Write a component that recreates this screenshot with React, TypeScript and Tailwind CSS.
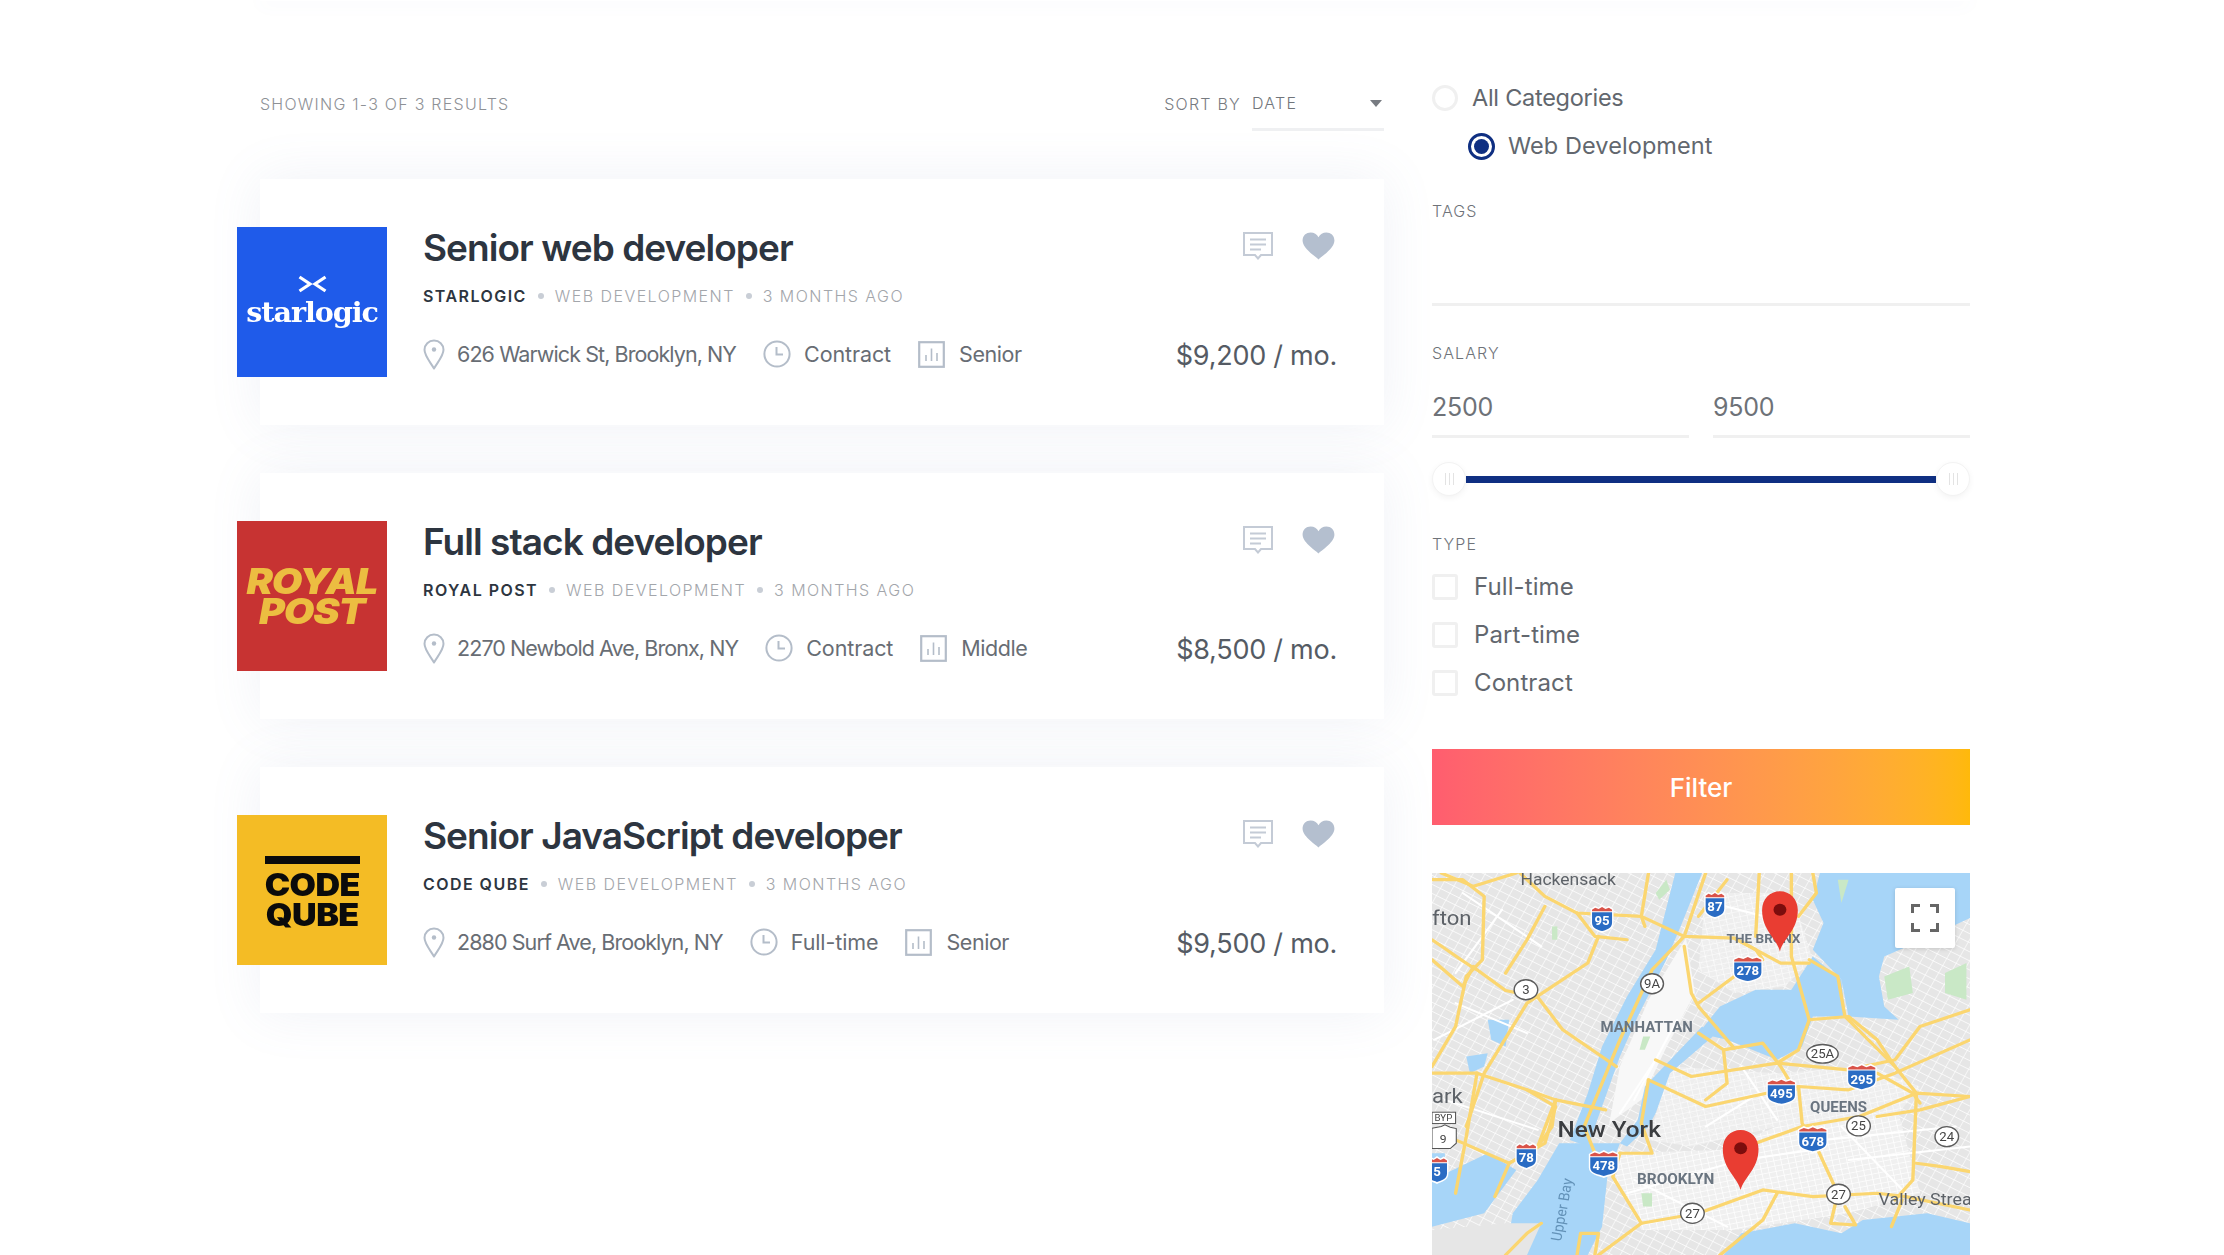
import React from "react";

const FONT = "font-['Inter','Liberation_Sans',sans-serif]";

function PinIcon() {
  return (
    <svg width="22" height="31" viewBox="0 0 22 31" fill="none" className="shrink-0">
      <path d="M11 29.5C8 24 1.5 17 1.5 10.8C1.5 5.6 5.7 1.5 11 1.5C16.3 1.5 20.5 5.6 20.5 10.8C20.5 17 14 24 11 29.5Z" stroke="#b4bdc9" strokeWidth="2" strokeLinejoin="round" />
      <circle cx="11" cy="10.5" r="2.2" fill="#b4bdc9" />
    </svg>
  );
}

function ClockIcon() {
  return (
    <svg width="28" height="28" viewBox="0 0 28 28" fill="none" className="shrink-0">
      <circle cx="14" cy="14" r="12.6" stroke="#b4bdc9" strokeWidth="2" />
      <path d="M13.5 7V14.5H20" stroke="#b4bdc9" strokeWidth="2" />
    </svg>
  );
}

function ChartIcon() {
  return (
    <svg width="27" height="27" viewBox="0 0 27 27" fill="none" className="shrink-0">
      <rect x="1.2" y="1.2" width="24.6" height="24.6" stroke="#b4bdc9" strokeWidth="2.2" />
      <path d="M8 20V14M13.5 20V7.5M19 20V12" stroke="#b4bdc9" strokeWidth="1.6" />
    </svg>
  );
}

function ChatIcon() {
  return (
    <svg width="30" height="28" viewBox="0 0 30 28" fill="none" className="shrink-0">
      <path d="M1 1H29V23H18L15 26.5L12 23H1V1Z" stroke="#c4cbd6" strokeWidth="2" />
      <path d="M7 7.5H23M7 12.5H23M7 17.5H18" stroke="#c4cbd6" strokeWidth="2" />
    </svg>
  );
}

function HeartIcon() {
  return (
    <svg width="33" height="28" viewBox="0 0 33 28" className="shrink-0">
      <path d="M16.5 27.5C14.5 25 1 17 .6 9C.3 3.5 4.2.4 8.6.4C12 .4 15 2.3 16.5 5.2C18 2.3 21 .4 24.4.4C28.8.4 32.7 3.5 32.4 9C32 17 18.5 25 16.5 27.5Z" fill="#b4bfcf" />
    </svg>
  );
}

function StarlogicLogo() {
  return (
    <div className="w-[150px] h-[150px] shrink-0 bg-[#1f5bea] flex flex-col items-center justify-center text-white -ml-[23px]">
      <svg width="29" height="18" viewBox="0 0 29 18" fill="none" className="mb-[3px]">
        <path d="M1.5 2L12 9L1.5 16M27.5 2L17 9L27.5 16" stroke="#fff" strokeWidth="3.2" />
      </svg>
      <span className="font-['DejaVu_Serif',serif] font-bold text-[27px] leading-[34px] tracking-[-1px] inline-block scale-x-[1.06] whitespace-nowrap">starlogic</span>
    </div>
  );
}

function RoyalLogo() {
  return (
    <div className="w-[150px] h-[150px] shrink-0 bg-[#c73332] flex flex-col items-center justify-center text-[#ecbd41] -ml-[23px] font-['Inter',sans-serif] font-black italic text-[35px] leading-[30px] tracking-[-1px]">
      <span className="inline-block scale-x-[1.13]">ROYAL</span>
      <span className="inline-block scale-x-[1.13]">POST</span>
    </div>
  );
}

function CodeLogo() {
  return (
    <div className="w-[150px] h-[150px] shrink-0 bg-[#f4bc25] flex flex-col items-center justify-center pt-[6px] text-[#0b0b0b] -ml-[23px] font-['Inter',sans-serif] font-black text-[31px] leading-[30px] tracking-[-.5px]">
      <div className="w-[95px] h-[8px] bg-[#0b0b0b] mb-[6px]" />
      <span className="inline-block scale-x-[1.1]">CODE</span>
      <span className="inline-block scale-x-[1.1]">QUBE</span>
    </div>
  );
}

type Job = {
  logo: React.ReactNode;
  title: string;
  company: string;
  addr: string;
  type: string;
  level: string;
  price: string;
};

const jobs: Job[] = [
  { logo: <StarlogicLogo />, title: "Senior web developer", company: "Starlogic", addr: "626 Warwick St, Brooklyn, NY", type: "Contract", level: "Senior", price: "$9,200 / mo." },
  { logo: <RoyalLogo />, title: "Full stack developer", company: "Royal Post", addr: "2270 Newbold Ave, Bronx, NY", type: "Contract", level: "Middle", price: "$8,500 / mo." },
  { logo: <CodeLogo />, title: "Senior JavaScript developer", company: "Code Qube", addr: "2880 Surf Ave, Brooklyn, NY", type: "Full-time", level: "Senior", price: "$9,500 / mo." },
];

function Dot() {
  return <span className="w-[6px] h-[6px] rounded-full bg-[#c9ced6] mx-[11px]" />;
}

function JobCard({ job }: { job: Job }) {
  return (
    <div className="h-[246px] bg-white flex items-center pr-[47px] shadow-[0_0_50px_rgba(120,135,180,0.11)]">
      {job.logo}
      <div className="flex-1 ml-[36px] -mt-[6px] flex flex-col">
        <div className="flex justify-between items-center h-[40px]">
          <h2 className="text-[37px] leading-[40px] font-semibold tracking-[-.95px] text-[#2d3540]">{job.title}</h2>
          <div className="flex items-center gap-[29px] pr-[2px] -mt-[5px]">
            <ChatIcon />
            <HeartIcon />
          </div>
        </div>
        <div className="flex items-center mt-[18px] h-[20px] text-[16px] uppercase tracking-[1.45px] text-[#a3a6ab] font-light">
          <span className="font-semibold text-[#2d3540]">{job.company}</span>
          <Dot />
          <span>Web Development</span>
          <Dot />
          <span>3 months ago</span>
        </div>
        <div className="flex items-center justify-between mt-[32px] h-[32px]">
          <div className="flex items-center text-[#686d74] text-[21.5px] tracking-[-.45px]">
            <PinIcon />
            <span className="ml-[12px] tracking-[-.92px]">{job.addr}</span>
            <span className="ml-[27px]"><ClockIcon /></span>
            <span className="ml-[13px] tracking-[-.1px]">{job.type}</span>
            <span className="ml-[27px]"><ChartIcon /></span>
            <span className="ml-[14px]">{job.level}</span>
          </div>
          <span className="text-[27px] text-[#555b64] tracking-[-.25px] mt-[5px]">{job.price}</span>
        </div>
      </div>
    </div>
  );
}

function Label({ children }: { children: React.ReactNode }) {
  return <div className="text-[16px] h-[24px] leading-[24px] uppercase tracking-[1.1px] text-[#6f7379] font-light">{children}</div>;
}

function Check({ label }: { label: string }) {
  return (
    <div className="h-[48px] flex items-center">
      <span className="w-[26px] h-[26px] border-[3px] border-[#f0f0f0] rounded-[3px]" />
      <span className="ml-[16px] text-[24px] text-[#62676e] tracking-[.1px]">{label}</span>
    </div>
  );
}

function Handle() {
  return (
    <div className="w-[34px] h-[34px] rounded-full bg-white border border-[#f3f3f3] shadow-[0_2px_6px_rgba(0,0,0,0.05)] flex items-center justify-center gap-[3px]">
      <span className="w-px h-[12px] bg-[#e3e3e3]" />
      <span className="w-px h-[12px] bg-[#e3e3e3]" />
      <span className="w-px h-[12px] bg-[#e3e3e3]" />
    </div>
  );
}

function Interstate({ x, y, n, w = 42 }: { x: number; y: number; n: string; w?: number }) {
  const h = 36;
  return (
    <g transform={`translate(${x},${y})`}>
      <path d={`M${-w} ${-h + 6}L${-w * 0.6} ${-h - 4}L${-w * 0.3} ${-h + 2}L0 ${-h - 6}L${w * 0.3} ${-h + 2}L${w * 0.6} ${-h - 4}L${w} ${-h + 6}V${h * 0.3}C${w} ${h * 0.9} ${w * 0.3} ${h} 0 ${h + 6}C${-w * 0.3} ${h} ${-w} ${h * 0.9} ${-w} ${h * 0.3}Z`} fill="#fff" />
      <path d={`M${-w + 4} ${-h + 16}H${w - 4}V${h * 0.3}C${w - 4} ${h * 0.8} ${w * 0.3} ${h - 4} 0 ${h}C${-w * 0.3} ${h - 4} ${-w + 4} ${h * 0.8} ${-w + 4} ${h * 0.3}Z`} fill="#2a6cc4" />
      <path d={`M${-w + 4} ${-h + 8}L${-w * 0.6} ${-h + 2}L${-w * 0.3} ${-h + 6}L0 ${-h}L${w * 0.3} ${-h + 6}L${w * 0.6} ${-h + 2}L${w - 4} ${-h + 8}V${-h + 13}H${-w + 4}Z`} fill="#d9534a" />
      <text x="0" y="19" textAnchor="middle" fontSize="37" fontWeight="700" fill="#fff" fontFamily="Roboto, sans-serif">{n}</text>
    </g>
  );
}

function Route({ x, y, n, rx = 33, ry = 30 }: { x: number; y: number; n: string; rx?: number; ry?: number }) {
  return (
    <g>
      <ellipse cx={x} cy={y} rx={rx} ry={ry} fill="#fff" stroke="#5b5b5b" strokeWidth="4" />
      <text x={x} y={y + 13} textAnchor="middle" fontSize="37" fill="#444" fontFamily="Roboto, sans-serif">{n}</text>
    </g>
  );
}

function Marker({ x, y }: { x: number; y: number }) {
  return (
    <g transform={`translate(${x},${y})`}>
      <path d="M0 125C-10 85 -50 62 -50 2C-50 -32 -28 -55 0 -55C28 -55 50 -32 50 2C50 62 10 85 0 125Z" fill="#e93c30" />
      <circle cx="0" cy="0" r="18" fill="#7c0c0c" />
    </g>
  );
}

const roads = [
  "M34 240C90 280 140 320 160 330L240 392L330 412L400 510L550 620",
  "M34 60L120 60L180 110L175 300L130 350L100 500L34 620",
  "M280 40L350 110L440 160L620 170L740 230L880 235L1010 310L1090 310",
  "M500 230L470 310L300 430L180 640L130 800",
  "M350 140L300 240L240 340",
  "M34 640L160 640L300 690L380 720L520 750",
  "M800 40L740 230L650 330L560 540L460 800L490 880",
  "M740 260L760 400L780 440L880 565",
  "M950 40L940 230",
  "M1040 40L1040 290L1090 480L1060 570L1000 610",
  "M1090 300L1170 350L1190 470L1330 620L1390 700L1380 960L1330 1020",
  "M1090 480L1200 470L1280 540L1330 620",
  "M1540 450L1400 500L1330 600L1200 630L1000 610L760 650L660 600",
  "M640 660L800 740L970 700L1060 680L1200 690L1330 640L1540 540",
  "M1060 680L1070 790L1110 860L1170 1000L1150 1090L1220 1095L1190 1040",
  "M940 850L1070 800L1230 770L1390 700L1540 710",
  "M620 1090L780 1060L960 990L1100 1010L1280 1000L1360 1010L1540 1050",
  "M560 880L540 950L620 1090L500 1185",
  "M100 840L250 910L350 850L380 740L300 690",
  "M1390 910L1460 920L1540 935",
  "M640 660L620 790L650 880L560 880",
  "M780 520L850 570L860 670L800 720",
  "M850 570L960 550L1010 620L1050 690",
  "M34 300L120 380L150 320",
  "M160 640L130 830L100 1000",
  "M380 720L370 800L330 860",
  "M440 1185L450 1120L500 1120L490 1185",
  "M1000 1000L960 1080L840 1185",
  "M1350 1020L1320 1100",
  "M1100 40L1110 100L1060 170",
  "M640 40L620 170L630 200",
  "M880 235L940 270L960 300L880 350L780 430",
  "M860 60L780 170",
  "M1280 640L1380 700L1400 730",
  "M1540 710L1400 750L1280 770",
  "M60 40L150 80L270 40",
  "M440 160L490 230L580 240",
  "M380 720L330 860L250 910L210 1010",
  "M240 1185L300 1120L340 1090",
];

const whiteRoads = [
  "M660 600L560 760",
  "M720 480L600 720",
  "M580 1000L900 900L1100 870",
  "M600 960L860 1100",
  "M1180 800L1360 1000",
  "M1130 840L1500 800",
  "M1200 900L1540 860",
  "M900 620L1000 780",
  "M800 800L950 700",
  "M820 130L1000 180",
  "M120 100L340 260",
  "M100 430L300 520",
  "M230 150L100 340",
  "M40 540L260 420",
  "M70 720L330 810",
];

function CityMap() {
  return (
    <svg viewBox="34 40 1506 1145" preserveAspectRatio="none" className="block w-full h-full">
      <defs>
        <pattern id="streets" width="30" height="24" patternUnits="userSpaceOnUse" patternTransform="rotate(28)">
          <path d="M0 0H30M0 0V24" stroke="#ffffff" strokeWidth="3.5" fill="none" />
        </pattern>
        <pattern id="fine" width="20" height="16" patternUnits="userSpaceOnUse" patternTransform="rotate(-12)">
          <rect width="20" height="16" fill="#f0f0f0" />
          <path d="M0 0H20M0 0V16" stroke="#ffffff" strokeWidth="4" fill="none" />
        </pattern>
        <filter id="soft" x="0" y="0" width="100%" height="100%">
          <feGaussianBlur stdDeviation="1.6" />
        </filter>
      </defs>
      <g filter="url(#soft)">
        <rect x="34" y="40" width="1506" height="1145" fill="#e6e6e6" />
        <rect x="34" y="40" width="1506" height="1145" fill="url(#streets)" />
        <path d="M560 880L840 870L1000 800L1340 760L1400 1000L1200 1060L880 1110L620 1110L550 960Z" fill="url(#fine)" />
        <path d="M700 620L1000 640L1250 620L1400 680L1340 760L1000 800L760 860L640 840Z" fill="url(#fine)" opacity=".8" />
        <path d="M800 100L1040 100L1100 300L1020 380L880 400L780 330Z" fill="url(#fine)" opacity=".8" />
        <path d="M745 235L770 400L700 540L620 720L530 790L560 620L640 420Z" fill="#f8f8f8" />
        <g fill="#a7d5f8">
          <path d="M715 40L790 40L730 200L690 300L610 470L560 590L500 770L470 860L420 840L470 700L510 560L580 410L660 270Z" />
          <path d="M390 850L560 850L525 950L510 1100L470 1185L240 1185L260 1060L330 960Z" />
          <path d="M190 880L270 930L180 1060L34 1100L34 960Z" />
          <path d="M1120 40L1540 40L1540 175L1450 220L1300 290L1285 350L1300 440L1340 480L1200 470L1180 360L1100 270L1130 190L1100 120Z" />
          <path d="M1100 290L1180 360L1190 470L1100 470L1070 560L1000 600L860 540L780 520L840 440L940 390L1040 390Z" />
          <path d="M790 500L820 530L700 640L660 760L640 800L580 860L560 850L610 780L630 680Z" />
          <path d="M850 1185L900 1120L1050 1090L1180 1120L1240 1080L1420 1060L1540 1090L1540 1185Z" />
          <path d="M130 590L190 580L180 620L140 640Z" />
          <path d="M190 480L250 480L240 560L200 540Z" />
          <path d="M34 880L70 880L70 960L34 960Z" />
        </g>
        <path d="M34 1110L240 1090L340 1090L300 1185L34 1185Z" fill="#e6e6e6" />
        <g fill="#c9e8c6">
          <path d="M1300 350L1370 320L1380 400L1310 420Z" />
          <path d="M1470 340L1530 310L1530 420L1470 400Z" />
          <path d="M620 1000L650 1000L650 1040L625 1040Z" />
          <path d="M625 530L645 530L630 570L615 570Z" />
          <path d="M370 200L385 200L385 240L370 240Z" />
          <path d="M660 100L690 60L700 90L670 120Z" />
          <path d="M1170 60L1200 60L1180 130Z" />
        </g>
        <g fill="none" stroke="#ffffff" strokeWidth="6" strokeLinecap="round">
          {whiteRoads.map((d) => (
            <path key={d} d={d} />
          ))}
        </g>
        <g fill="none" stroke="#fbd66f" strokeWidth="9.5" strokeLinejoin="round" strokeLinecap="round">
          {roads.map((d) => (
            <path key={d} d={d} />
          ))}
        </g>
        <g fontFamily="Roboto, sans-serif" fill="#5d6268">
          <text x="415" y="75" textAnchor="middle" fontSize="49">Hackensack</text>
          <text x="34" y="197" fontSize="62">fton</text>
          <text x="34" y="730" fontSize="62">ark</text>
          <text x="530" y="832" textAnchor="middle" fontSize="68" fontWeight="500" fill="#3b3d40">New York</text>
          <text x="635" y="517" textAnchor="middle" fontSize="42" fontWeight="700" fill="#6a7480">MANHATTAN</text>
          <text x="962" y="251" textAnchor="middle" fontSize="38" fontWeight="700" fill="#6a7480">THE BRONX</text>
          <text x="1172" y="755" textAnchor="middle" fontSize="42" fontWeight="700" fill="#6a7480">QUEENS</text>
          <text x="716" y="972" textAnchor="middle" fontSize="43" fontWeight="700" fill="#6a7480">BROOKLYN</text>
          <text x="1284" y="1036" fontSize="50">Valley Strea</text>
          <text transform="translate(395,1145) rotate(-80)" fontSize="42" fill="#6392b8">Upper Bay</text>
        </g>
        <Interstate x={510} y={178} n="95" w={32} />
        <Interstate x={826} y={136} n="87" w={30} />
        <Interstate x={918} y={328} n="278" w={42} />
        <Interstate x={298} y={888} n="78" w={31} />
        <Interstate x={515} y={912} n="478" w={42} />
        <Interstate x={1012} y={696} n="495" w={42} />
        <Interstate x={1237} y={652} n="295" w={42} />
        <Interstate x={1100} y={838} n="678" w={42} />
        <Interstate x={48} y={930} n="5" w={32} />
        <Route x={297} y={390} n="3" />
        <Route x={650} y={372} n="9A" rx={32} />
        <Route x={1127} y={582} n="25A" rx={44} ry={28} />
        <Route x={1228} y={798} n="25" />
        <Route x={1475} y={830} n="24" />
        <Route x={1172} y={1003} n="27" />
        <Route x={763} y={1060} n="27" />
        <rect x="34" y="757" width="66" height="34" fill="#fff" stroke="#555" strokeWidth="3" />
        <text x="66" y="784" textAnchor="middle" fontSize="27" fill="#444" fontFamily="Roboto, sans-serif">BYP</text>
        <path d="M34 805L60 800L70 795L85 802L102 806V850L85 866H34Z" fill="#fff" stroke="#555" strokeWidth="3" />
        <text x="65" y="848" textAnchor="middle" fontSize="34" fill="#444" fontFamily="Roboto, sans-serif">9</text>
        <Marker x={1008} y={150} />
        <Marker x={898} y={865} />
      </g>
    </svg>
  );
}

export default function App() {
  return (
    <div className={`${FONT} w-[2224px] h-[1255px] bg-white overflow-hidden relative`}>
      <div className="ml-[260px] w-[1710px] h-[1px] bg-white shadow-[0_0_18px_rgba(120,135,180,0.3)]" />
      <div className="ml-[260px] w-[1710px] flex gap-[48px] items-start">
        <main className="w-[1124px] pt-[77px]">
          <div className="flex justify-between items-start h-[53px] text-[16px] uppercase tracking-[1.25px] font-light">
            <span className="h-[52px] leading-[52px] text-[#8e9196]">Showing 1-3 of 3 results</span>
            <div className="flex items-start">
              <span className="leading-[52px] text-[#777b81] mr-[11px]">Sort by</span>
              <div className="w-[132px] h-[53px] border-b-[3px] border-[#eff0f2] flex items-center justify-between text-[#71757b]">
                <span>Date</span>
                <span className="w-0 h-0 border-x-[6px] border-x-transparent border-t-[7px] border-t-[#777b81] mr-[2px]" />
              </div>
            </div>
          </div>
          <div className="mt-[48px] flex flex-col gap-[48px]">
            {jobs.map((job) => (
              <JobCard key={job.title} job={job} />
            ))}
          </div>
        </main>
        <aside className="w-[538px] pt-[73px]">
          <div className="h-[48px] flex items-center">
            <span className="w-[26px] h-[26px] rounded-full border-[3px] border-[#f0f0f0]" />
            <span className="ml-[14px] text-[23.5px] text-[#62676e] tracking-[-.27px]">All Categories</span>
          </div>
          <div className="h-[48px] flex items-center pl-[36px]">
            <span className="w-[27px] h-[27px] rounded-full border-[3px] border-[#0f2f82] flex items-center justify-center">
              <span className="w-[15px] h-[15px] rounded-full bg-[#0f2f82]" />
            </span>
            <span className="ml-[13px] text-[23.5px] text-[#62676e] tracking-[.08px]">Web Development</span>
          </div>
          <div className="mt-[29px]">
            <Label>Tags</Label>
          </div>
          <div className="h-[83px] border-b-[3px] border-[#f0f0f0]" />
          <div className="mt-[35px]">
            <Label>Salary</Label>
          </div>
          <div className="flex gap-[24px]">
            <div className="flex-1 h-[73px] pt-[16px] border-b-[3px] border-[#f0f0f0] flex items-center text-[25px] text-[#6e7278] tracking-[-.2px]">2500</div>
            <div className="flex-1 h-[73px] pt-[16px] border-b-[3px] border-[#f0f0f0] flex items-center text-[25px] text-[#6e7278] tracking-[-.2px]">9500</div>
          </div>
          <div className="mt-[24px] h-[34px] flex items-center">
            <Handle />
            <div className="flex-1 h-[7px] bg-[#0f2f82]" />
            <Handle />
          </div>
          <div className="mt-[36px]">
            <Label>Type</Label>
          </div>
          <div className="mt-[7px]">
            <Check label="Full-time" />
            <Check label="Part-time" />
            <Check label="Contract" />
          </div>
          <button className="mt-[42px] w-full h-[76px] bg-gradient-to-r from-[#ff5d6f] to-[#ffb90a] text-white text-[26px] font-medium">Filter</button>
          <div className="mt-[48px] h-[382px] relative overflow-hidden">
            <CityMap />
            <div className="absolute left-[463px] top-[15px] w-[60px] h-[60px] bg-white rounded-[2px] shadow-[0_1px_4px_rgba(0,0,0,0.15)] flex items-center justify-center">
              <svg width="28" height="28" viewBox="0 0 28 28" fill="none">
                <path d="M1.5 9V1.5H9M19 1.5H26.5V9M26.5 19V26.5H19M9 26.5H1.5V19" stroke="#666" strokeWidth="3" />
              </svg>
            </div>
          </div>
        </aside>
      </div>
    </div>
  );
}
